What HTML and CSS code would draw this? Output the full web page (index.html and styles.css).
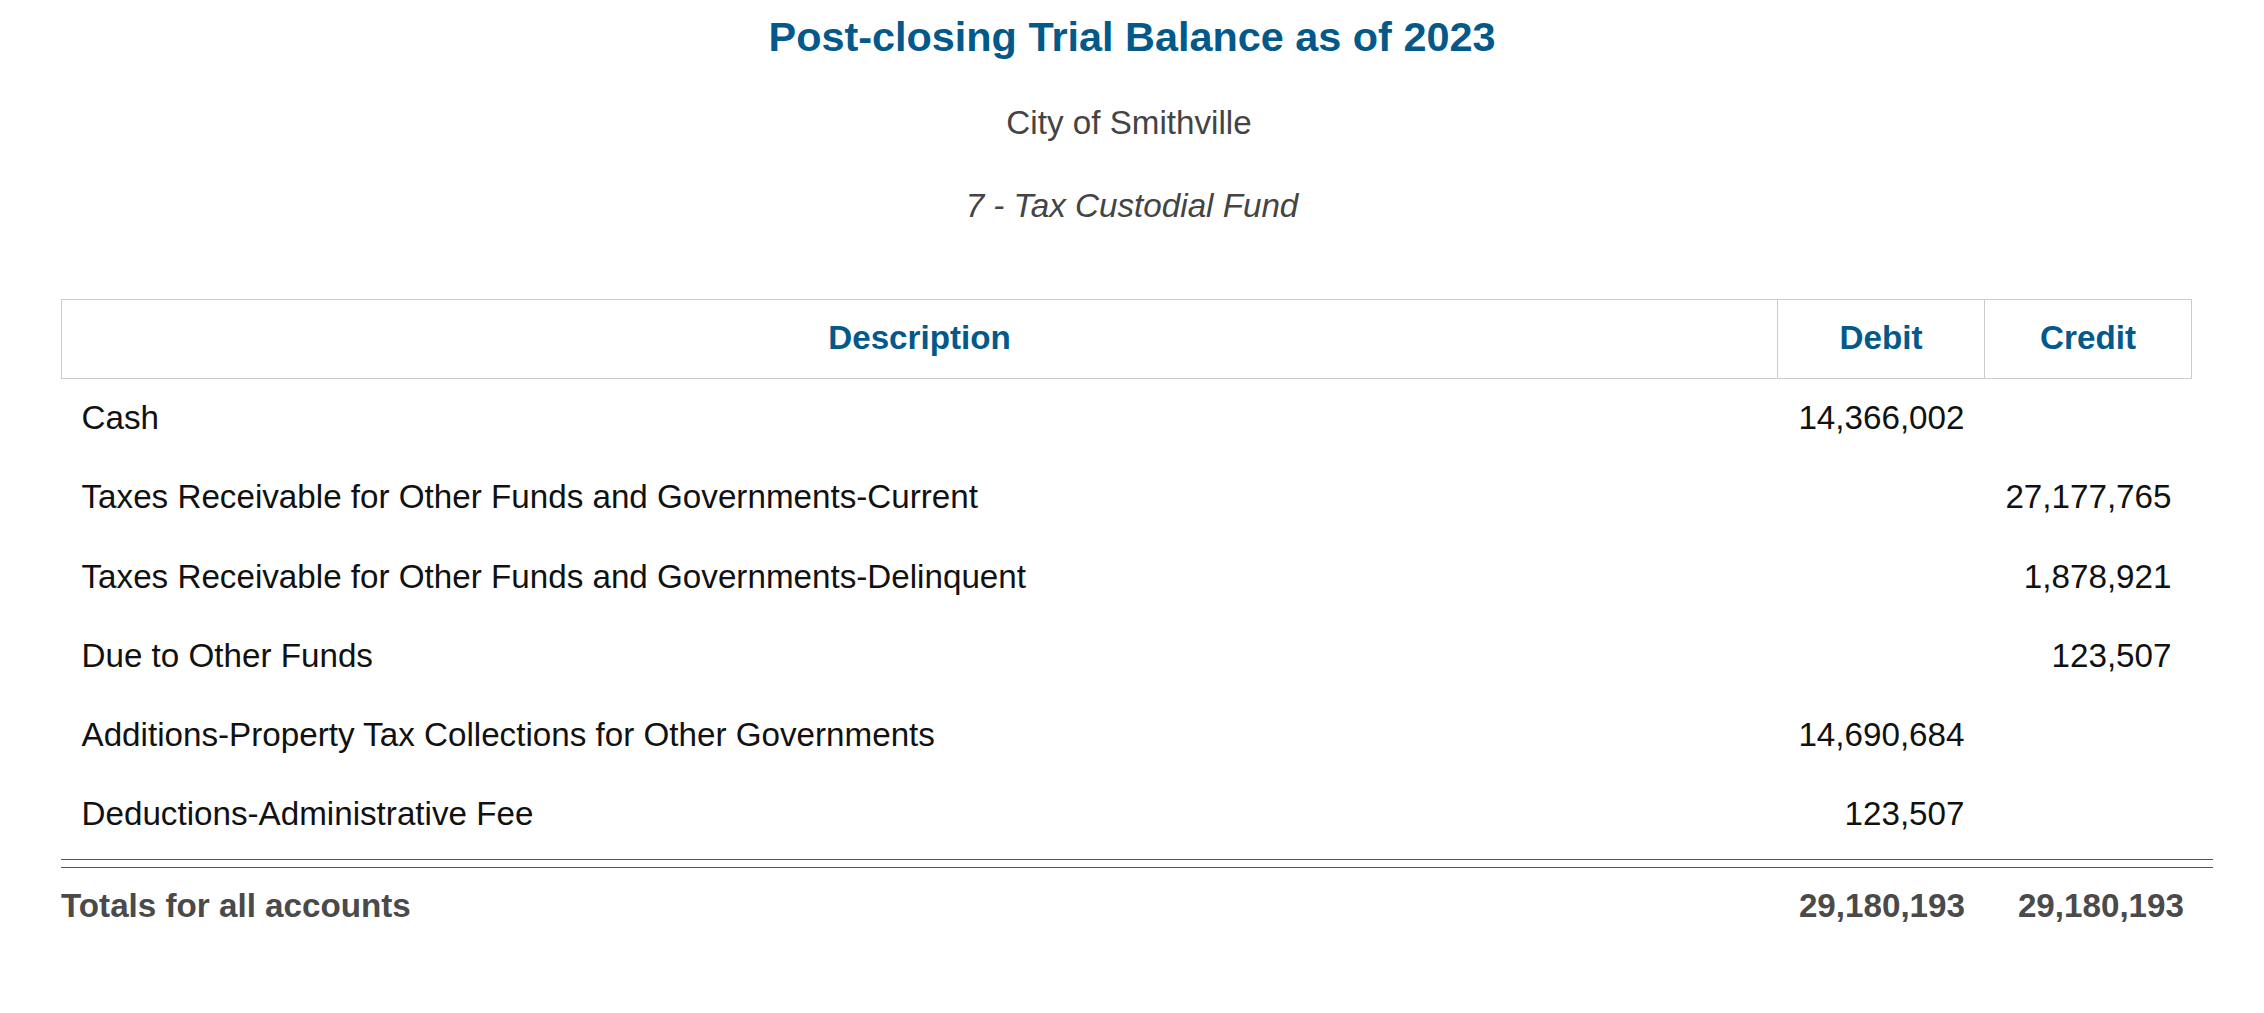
FILE: index.html
```html
<!DOCTYPE html>
<html lang="en">
<head>
<meta charset="utf-8">
<title>Post-closing Trial Balance as of 2023</title>
<link rel="stylesheet" href="styles.css">
</head>
<body>
<header class="report-head">
  <h1 class="report-title">Post-closing Trial Balance as of 2023</h1>
  <p class="report-entity">City of Smithville</p>
  <p class="report-fund">7 - Tax Custodial Fund</p>
</header>
<main class="report">
  <table class="tb">
    <colgroup>
      <col class="col-desc">
      <col class="col-num">
      <col class="col-num">
    </colgroup>
    <thead>
      <tr>
        <th>Description</th>
        <th>Debit</th>
        <th>Credit</th>
      </tr>
    </thead>
    <tbody>
      <tr><td>Cash</td><td class="num">14,366,002</td><td class="num"></td></tr>
      <tr><td>Taxes Receivable for Other Funds and Governments-Current</td><td class="num"></td><td class="num">27,177,765</td></tr>
      <tr><td>Taxes Receivable for Other Funds and Governments-Delinquent</td><td class="num"></td><td class="num">1,878,921</td></tr>
      <tr><td>Due to Other Funds</td><td class="num"></td><td class="num">123,507</td></tr>
      <tr><td>Additions-Property Tax Collections for Other Governments</td><td class="num">14,690,684</td><td class="num"></td></tr>
      <tr><td>Deductions-Administrative Fee</td><td class="num">123,507</td><td class="num"></td></tr>
    </tbody>
  </table>
  <div class="double-rule"></div>
  <div class="totals">
    <span class="totals-label">Totals for all accounts</span>
    <span class="totals-debit">29,180,193</span>
    <span class="totals-credit">29,180,193</span>
  </div>
</main>
</body>
</html>
```
FILE: styles.css
```css
html, body {
  margin: 0;
  padding: 0;
  background: #ffffff;
}

body {
  font-family: "Liberation Sans", Arial, Helvetica, sans-serif;
  font-size: 33.2px;
  line-height: 37.2px;
  color: #111111;
}

.report-head {
  text-align: center;
  padding-top: 14px;
}

.report-title {
  margin: 0 0 44px 0;
  font-size: 41.4px;
  line-height: 46px;
  font-weight: bold;
  color: #04598b;
}

.report-entity {
  margin: 0 0 45.5px 0;
  padding-right: 6px;
  color: #444444;
}

.report-fund {
  margin: 0;
  font-style: italic;
  color: #444444;
}

.report {
  margin: 75px 0 0 61px;
  width: 2152px;
}

.tb {
  width: 2131px;
  border-collapse: collapse;
  table-layout: fixed;
}

.col-num {
  width: 207px;
}

.tb th {
  border: 1px solid #cccccc;
  padding: 19px 20px 22px;
  font-weight: bold;
  color: #04598b;
  text-align: center;
}

.tb td {
  padding: 20px 20px 22px;
  text-align: left;
  white-space: nowrap;
}

.tb td.num {
  text-align: right;
}

.double-rule {
  margin-top: 5px;
  height: 7px;
  border-top: 1px solid #555555;
  border-bottom: 1px solid #555555;
}

.totals {
  display: grid;
  grid-template-columns: 1fr 207px 228px;
  padding-top: 19px;
  font-weight: bold;
  color: #4a4a4a;
}

.totals-debit {
  text-align: right;
  padding-right: 20px;
}

.totals-credit {
  text-align: right;
  padding-right: 29px;
}
```
